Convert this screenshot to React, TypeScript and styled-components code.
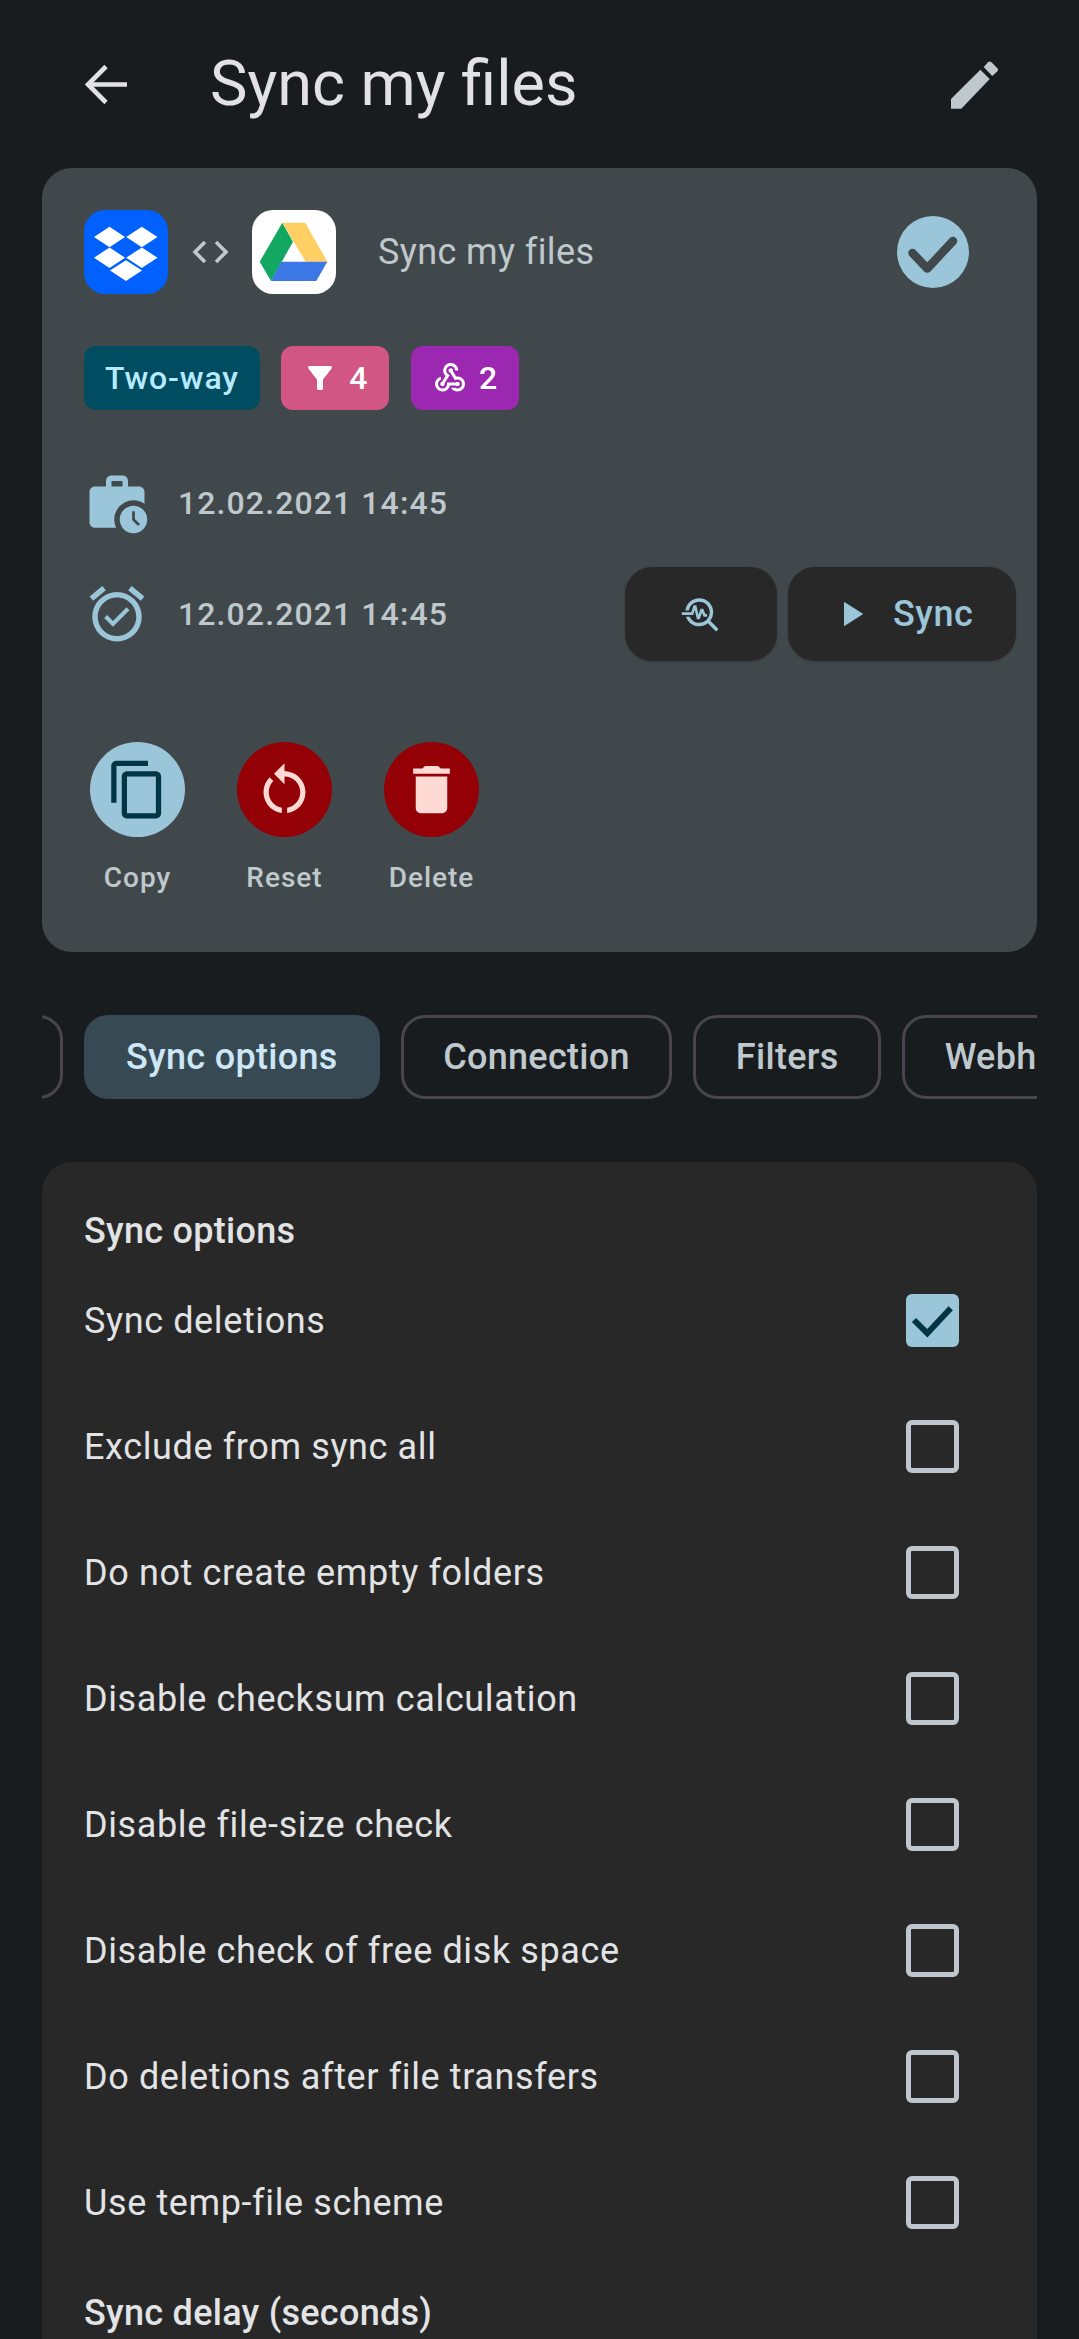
import React from 'react';
import styled, { createGlobalStyle } from 'styled-components';
import {
  MdFilterAlt, MdOutlineWebhook, MdWorkHistory, MdOutlineAlarmOn,
  MdOutlineTroubleshoot, MdPlayArrow, MdOutlineContentCopy, MdRestartAlt, MdDelete,
} from 'react-icons/md';

const Global = createGlobalStyle`
  html, body { margin: 0; padding: 0; background: #181c1f; }
  body { font-family: Roboto, "Liberation Sans", sans-serif; -webkit-font-smoothing: antialiased; }
`;

const Page = styled.div`
  width: 1079px;
  height: 2339px;
  overflow: hidden;
  background: #181c1f;
  padding: 0 42px;
  box-sizing: border-box;
`;

const Header = styled.header`
  height: 168px;
  display: flex;
  align-items: center;
  color: #e2e2e5;
  margin-left: 42px;
  margin-right: 38px;
`;

const BackIcon = styled.svg`
  width: 44px;
  height: 44px;
  flex: none;
  margin-right: 82px;
  margin-top: 1px;
`;

const Title = styled.h1`
  flex: 1;
  margin: 0;
  font-size: 63px;
  font-weight: 400;
  line-height: 72px;
`;

const EditIcon = styled.svg`
  width: 48px;
  height: 48px;
  flex: none;
  margin-top: 1px;
`;

const Card = styled.section`
  height: 784px;
  box-sizing: border-box;
  background: #41484b;
  border-radius: 30px;
  padding: 42px 21px 0 42px;
  display: flex;
  flex-direction: column;
`;

const TopRow = styled.div`
  display: flex;
  align-items: center;
  height: 84px;
`;

const Logo = styled.svg`
  width: 84px;
  height: 84px;
  flex: none;
  display: block;
`;

const Arrows = styled.svg`
  width: 84px;
  height: 84px;
  flex: none;
`;

const CardTitle = styled.div`
  flex: 1;
  margin-left: 42px;
  font-size: 36px;
  color: #bfc8cc;
  letter-spacing: 0.4px;
`;

const DoneBadge = styled.svg`
  width: 72px;
  height: 72px;
  flex: none;
  margin-right: 47px;
`;

const ChipRow = styled.div`
  display: flex;
  gap: 21.5px;
  margin-top: 52px;
`;

const Chip = styled.div<{ $bg: string; $fg: string }>`
  height: 64px;
  box-sizing: border-box;
  padding: 0 21px;
  display: flex;
  align-items: center;
  gap: 11px;
  border-radius: 12px;
  background: ${p => p.$bg};
  color: ${p => p.$fg};
  font-size: 32px;
  font-weight: 500;
  letter-spacing: 0.85px;
  svg { width: 36px; height: 36px; flex: none; }
`;

const DateRow = styled.div<{ $mt: number }>`
  display: flex;
  align-items: center;
  margin-top: ${p => p.$mt}px;
  height: 94px;
`;

const DateIcon = styled.div`
  width: 66px;
  height: 66px;
  margin-right: 28px;
  color: #9bc5d8;
  flex: none;
  svg { width: 66px; height: 66px; display: block; }
`;

const DateText = styled.div`
  flex: 1;
  color: #bfc8cc;
  font-size: 32px;
  font-weight: 500;
  letter-spacing: 1.1px;
`;

const ActionGroup = styled.div`
  display: flex;
  gap: 11px;
`;

const ActionButton = styled.div`
  width: 152px;
  height: 94px;
  border-radius: 27px;
  background: #282828;
  color: #9bc5d8;
  display: flex;
  align-items: center;
  justify-content: center;
  box-shadow: 0 1px 3px rgba(0, 0, 0, 0.2);
  font-size: 36px;
  font-weight: 500;
  letter-spacing: 0.5px;
`;

const SyncButton = styled(ActionButton)`
  width: 228px;
  box-sizing: border-box;
  justify-content: flex-start;
  padding-left: 42px;
  gap: 21px;
`;

const CircleRow = styled.div`
  display: flex;
  gap: 52px;
  margin-top: 81px;
  margin-left: 6px;
`;

const CircleItem = styled.div`
  width: 95px;
  display: flex;
  flex-direction: column;
  align-items: center;
  gap: 20px;
`;

const Circle = styled.div<{ $bg: string; $fg: string }>`
  width: 95px;
  height: 95px;
  border-radius: 50%;
  background: ${p => p.$bg};
  color: ${p => p.$fg};
  display: flex;
  align-items: center;
  justify-content: center;
  font-size: 63px;
`;

const CircleLabel = styled.div`
  font-size: 28px;
  font-weight: 500;
  color: #bfc8cc;
  letter-spacing: 1px;
  white-space: nowrap;
  line-height: 42px;
`;

const TabStrip = styled.nav`
  display: flex;
  gap: 21px;
  overflow: hidden;
  margin-top: 63px;
`;

const Tab = styled.div<{ $active?: boolean; $clipped?: boolean }>`
  height: 84px;
  box-sizing: border-box;
  flex: none;
  padding: 0 ${p => (p.$active ? 42 : 39.5)}px;
  display: flex;
  align-items: center;
  border-radius: 24px;
  font-size: 36px;
  font-weight: 500;
  letter-spacing: 0.3px;
  color: ${p => (p.$active ? '#cde7f6' : '#bfc8cc')};
  background: ${p => (p.$active ? '#374a54' : 'transparent')};
  border: ${p => (p.$active ? 'none' : '3px solid #49454f')};
  margin-left: ${p => (p.$clipped ? '-79px' : '0')};
  width: ${p => (p.$clipped ? '100px' : 'auto')};
`;

const Panel = styled.section`
  margin-top: 63px;
  background: #282828;
  border-radius: 30px;
  padding: 44px 42px 0;
  color: #e2e3e5;
  height: 1300px;
  box-sizing: border-box;
`;

const SectionTitle = styled.h2`
  margin: 0;
  font-size: 36px;
  font-weight: 500;
  line-height: 50px;
  letter-spacing: 0.28px;
  color: #e2e3e5;
`;

const OptionRow = styled.div`
  height: 126px;
  display: flex;
  align-items: center;
  justify-content: space-between;
  padding-right: 36px;
  font-size: 36px;
  letter-spacing: 0.62px;
  &:first-of-type { margin-top: 1.5px; }
`;

const EmptyBox = styled.div`
  width: 53px;
  height: 53px;
  box-sizing: border-box;
  border-radius: 6px;
  border: 5px solid #bec6ce;
`;

const TickBox = styled.svg`
  width: 53px;
  height: 53px;
  display: block;
`;

const DelayTitle = styled(SectionTitle)`
  margin-top: 22px;
`;

const options = [
  'Exclude from sync all',
  'Do not create empty folders',
  'Disable checksum calculation',
  'Disable file-size check',
  'Disable check of free disk space',
  'Do deletions after file transfers',
  'Use temp-file scheme',
];

const Dropbox = () => (
  <Logo viewBox="0 0 84 84">
    <rect width="84" height="84" rx="21" fill="#0061ff" />
    <g fill="#fff">
      <polygon points="10,27 25.5,16.7 41,27 25.5,37.3" />
      <polygon points="42.2,27 57.8,16.7 73.5,27 57.8,37.3" />
      <polygon points="10,47.7 25.5,37.5 41,47.7 25.5,58" />
      <polygon points="42.2,47.7 57.8,37.5 73.5,47.7 57.8,58" />
      <polygon points="26,60.5 42,50.2 58,60.5 42,71" />
    </g>
  </Logo>
);

const Drive = () => (
  <Logo viewBox="0 0 84 84">
    <rect width="84" height="84" rx="21" fill="#fff" />
    <polygon points="30.3,12.7 41,31.7 19,71 7.7,51.7" fill="#12a862" />
    <polygon points="30.3,12.7 53.3,12.7 75.3,51.7 53.7,51.7" fill="#ffcf63" />
    <polygon points="29.3,51.7 75.3,51.7 64.3,71 19,71" fill="#3b78e5" />
  </Logo>
);

export default function App() {
  return (
    <>
      <Global />
      <Page>
        <Header>
          <BackIcon viewBox="0 0 44 44">
            <path d="M43 21.5H4 M22 3.5 L4 21.5 L22 39.5" fill="none" stroke="currentColor" strokeWidth="4.6" />
          </BackIcon>
          <Title>Sync my files</Title>
          <EditIcon viewBox="0 0 48 48">
            <g fill="#bfc8cc">
              <polygon points="0,38 29.3,8.7 38.7,18 10.3,47.7 0,47.7" />
              <path d="M32.7 6 L37 1.2 Q38.7 -0.3 40.4 1.2 L46.2 7 Q47.8 8.7 46.2 10.4 L41.3 15 Z" />
            </g>
          </EditIcon>
        </Header>
        <Card>
          <TopRow>
            <Dropbox />
            <Arrows viewBox="0 0 84 84">
              <path d="M37 32 L27 42 L37 52 M48 32 L58 42 L48 52" fill="none" stroke="#bfc8cc" strokeWidth="3.6" />
            </Arrows>
            <Drive />
            <CardTitle>Sync my files</CardTitle>
            <DoneBadge viewBox="0 0 72 72">
              <circle cx="36" cy="36" r="36" fill="#9bc5d8" />
              <path d="M15.5 37 L30.3 52.5 L56 25" fill="none" stroke="#41484b" strokeWidth="8.5" strokeLinecap="round" strokeLinejoin="round" />
            </DoneBadge>
          </TopRow>
          <ChipRow>
            <Chip $bg="#004d61" $fg="#b8eaff">Two-way</Chip>
            <Chip $bg="#d25684" $fg="#ffffff"><MdFilterAlt />4</Chip>
            <Chip $bg="#9c27b0" $fg="#ffffff"><MdOutlineWebhook />2</Chip>
          </ChipRow>
          <DateRow $mt={46}>
            <DateIcon><MdWorkHistory /></DateIcon>
            <DateText>12.02.2021 14:45</DateText>
          </DateRow>
          <DateRow $mt={17}>
            <DateIcon><MdOutlineAlarmOn /></DateIcon>
            <DateText>12.02.2021 14:45</DateText>
            <ActionGroup>
              <ActionButton><MdOutlineTroubleshoot size={42} /></ActionButton>
              <SyncButton><MdPlayArrow size={42} />Sync</SyncButton>
            </ActionGroup>
          </DateRow>
          <CircleRow>
            <CircleItem>
              <Circle $bg="#9bc5d8" $fg="#003544"><MdOutlineContentCopy /></Circle>
              <CircleLabel>Copy</CircleLabel>
            </CircleItem>
            <CircleItem>
              <Circle $bg="#930006" $fg="#ffdad4"><MdRestartAlt /></Circle>
              <CircleLabel>Reset</CircleLabel>
            </CircleItem>
            <CircleItem>
              <Circle $bg="#930006" $fg="#ffdad4"><MdDelete /></Circle>
              <CircleLabel>Delete</CircleLabel>
            </CircleItem>
          </CircleRow>
        </Card>
        <TabStrip>
          <Tab $clipped />
          <Tab $active>Sync options</Tab>
          <Tab>Connection</Tab>
          <Tab>Filters</Tab>
          <Tab>Webhooks</Tab>
        </TabStrip>
        <Panel>
          <SectionTitle>Sync options</SectionTitle>
          <OptionRow>
            Sync deletions
            <TickBox viewBox="0 0 53 53">
              <rect width="53" height="53" rx="6" fill="#9bc5d8" />
              <path d="M8 26 L21.3 39.3 L44.7 14.3" fill="none" stroke="#003544" strokeWidth="6" />
            </TickBox>
          </OptionRow>
          {options.map(o => (
            <OptionRow key={o}>
              {o}
              <EmptyBox />
            </OptionRow>
          ))}
          <DelayTitle>Sync delay (seconds)</DelayTitle>
        </Panel>
      </Page>
    </>
  );
}
